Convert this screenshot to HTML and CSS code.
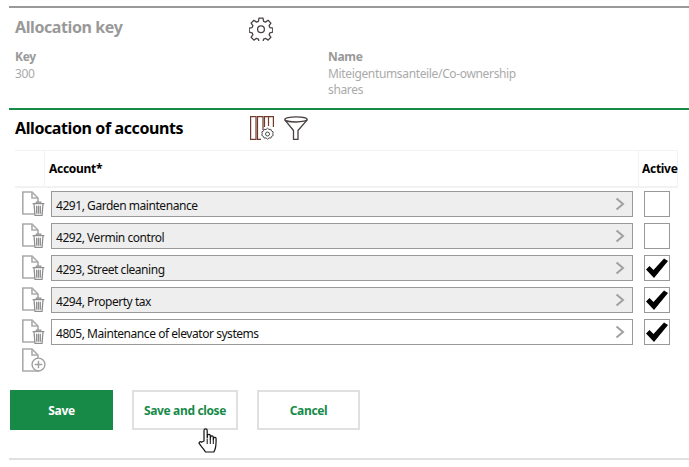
FILE: index.html
```html
<!DOCTYPE html>
<html lang="en">
<head>
<meta charset="utf-8">
<title>Allocation key</title>
<link rel="stylesheet" href="styles.css">
</head>
<body>
<svg class="defs" width="0" height="0" aria-hidden="true">
  <defs>
    <symbol id="gear" viewBox="0 0 24 24">
      <path fill="none" stroke="currentColor" stroke-width="1.3" stroke-linejoin="round" d="M10 1.200h4l.6 3.100 1.900.8 2.600-1.800 2.800 2.800-1.800 2.600.8 1.900 2.900.6v4l-2.900.6-.8 1.900 1.800 2.600-2.800 2.800-2.600-1.800-1.900.8-.6 2.900h-4l-.6-2.900-1.900-.8-2.600 1.800-2.800-2.800 1.800-2.600-.8-1.900-2.900-.6v-4l2.900-.6.8-1.900-1.800-2.600 2.800-2.800 2.600 1.800 1.900-.8z"/>
      <circle cx="12" cy="12.200" r="3.400" fill="none" stroke="currentColor" stroke-width="1.3"/>
    </symbol>
    <symbol id="doc" viewBox="0 0 20 24">
      <path fill="none" stroke="#aaa" stroke-width="1.600" d="M1.800 1h9.200l6 6v16h-15.200z"/>
      <path fill="none" stroke="#aaa" stroke-width="1.600" d="M11 1v6h6"/>
    </symbol>
    <symbol id="trash" viewBox="0 0 12 14">
      <path fill="#fff" stroke="#8f8f8f" stroke-width="1.200" d="M.5 2.500h11M4 2.500V1h4v1.500M1.800 2.500L2.700 13.500h6.600l.9-11z"/>
      <path stroke="#8f8f8f" stroke-width="1.200" d="M4.300 4.500v7.500M6 4.500v7.500M7.700 4.500v7.500"/>
    </symbol>
    <symbol id="chev" viewBox="0 0 10 14">
      <path d="M1.500 1.500L8 7l-6.500 5.500" fill="none" stroke="#a0a0a0" stroke-width="2"/>
    </symbol>
    <symbol id="tick" viewBox="0 0 22 20">
      <path d="M0 11.500L3.500 8l4 4L18 .5 22 3 8 20z" fill="#000"/>
    </symbol>
  </defs>
</svg>
<main class="page">
  <section class="key">
    <div class="head">
      <h2 class="title title-muted">Allocation key</h2>
      <svg class="gear-icon"><use href="#gear"/></svg>
    </div>
    <div class="fields">
      <div class="field field-key">
        <div class="label">Key</div>
        <div class="value">300</div>
      </div>
      <div class="field field-name">
        <div class="label">Name</div>
        <div class="value">Miteigentumsanteile/Co-ownership shares</div>
      </div>
    </div>
  </section>

  <section class="accounts">
    <div class="head head-accounts">
      <h2 class="title">Allocation of accounts</h2>
      <div class="tools">
        <svg class="tool-columns" viewBox="0 0 24 24">
          <g fill="none" stroke="#6e3a2c" stroke-width="1.200">
            <rect x=".6" y=".6" width="5.400" height="22.800"/>
            <path d="M13 14V.6H7.500v22.800H11"/>
            <path d="M14.500 11V.6H18.500V10M18.500.6h4.900V11"/>
          </g>
          <g fill="#fff" stroke="#4d4d4d" stroke-width="1">
            <path d="M17.500 12.200l1.500 1.300 1.900-.2.600 1.700 1.700.9-.4 1.800.4 1.800-1.700.9-.6 1.700-1.900-.2-1.500 1.300-1.500-1.300-1.900.2-.6-1.700-1.700-.9.400-1.800-.4-1.800 1.700-.9.6-1.700 1.900.2z"/>
            <circle cx="17.500" cy="18" r="2"/>
          </g>
        </svg>
        <svg class="tool-filter" viewBox="0 0 24 24">
          <g fill="none" stroke="#4a4040" stroke-width="1.300" stroke-linejoin="round">
            <ellipse cx="12" cy="3.400" rx="11.200" ry="2.600"/>
            <path d="M.8 3.800L9.500 14.500v9h4.500v-9L23.200 3.800"/>
          </g>
        </svg>
      </div>
    </div>

    <div class="grid-head">
      <div class="cell-icon"></div>
      <div class="cell-account">Account*</div>
      <div class="cell-active">Active</div>
    </div>

    <div class="rows">
      <div class="row">
        <div class="row-icon"><svg class="doc"><use href="#doc"/></svg><svg class="trash"><use href="#trash"/></svg></div>
        <div class="picker picker-off"><span>4291, Garden maintenance</span><svg class="chev"><use href="#chev"/></svg></div>
        <div class="check"></div>
      </div>
      <div class="row">
        <div class="row-icon"><svg class="doc"><use href="#doc"/></svg><svg class="trash"><use href="#trash"/></svg></div>
        <div class="picker picker-off"><span>4292, Vermin control</span><svg class="chev"><use href="#chev"/></svg></div>
        <div class="check"></div>
      </div>
      <div class="row">
        <div class="row-icon"><svg class="doc"><use href="#doc"/></svg><svg class="trash"><use href="#trash"/></svg></div>
        <div class="picker picker-off"><span>4293, Street cleaning</span><svg class="chev"><use href="#chev"/></svg></div>
        <div class="check"><svg class="tick"><use href="#tick"/></svg></div>
      </div>
      <div class="row">
        <div class="row-icon"><svg class="doc"><use href="#doc"/></svg><svg class="trash"><use href="#trash"/></svg></div>
        <div class="picker picker-off"><span>4294, Property tax</span><svg class="chev"><use href="#chev"/></svg></div>
        <div class="check"><svg class="tick"><use href="#tick"/></svg></div>
      </div>
      <div class="row">
        <div class="row-icon"><svg class="doc"><use href="#doc"/></svg><svg class="trash"><use href="#trash"/></svg></div>
        <div class="picker"><span>4805, Maintenance of elevator systems</span><svg class="chev"><use href="#chev"/></svg></div>
        <div class="check"><svg class="tick"><use href="#tick"/></svg></div>
      </div>
    </div>

    <div class="add-row">
      <svg class="doc"><use href="#doc"/></svg>
      <svg class="plus" viewBox="0 0 14 14"><circle cx="7" cy="7" r="6" fill="#fff" stroke="#a0a0a0" stroke-width="1.300"/><path d="M7 3.500v7M3.500 7h7" stroke="#a0a0a0" stroke-width="1.300"/></svg>
    </div>
  </section>

  <div class="actions">
    <button class="btn btn-primary" type="button">Save</button>
    <button class="btn btn-close" type="button">Save and close</button>
    <button class="btn btn-cancel" type="button">Cancel</button>
    <svg class="cursor" viewBox="0 0 20 26"><path d="M6 13V2.500a1.600 1.600 0 0 1 3.200 0V10l.3-2.400a1.400 1.400 0 0 1 2.800.2V11l.3-2.200a1.400 1.400 0 0 1 2.700.3V11.500l.3-1.400a1.300 1.300 0 0 1 2.500.4c0 4 0 7-.7 9.500-.4 1.600-1 3-1.500 4H7.500c-1-1.800-2.400-3.400-4-5.400L1.300 15.700c-.8-1.300.9-2.700 2.200-1.500z" fill="#fff" stroke="#111" stroke-width="1.200" stroke-linejoin="round"/><path d="M9.200 11v5M12.300 11v5M15.300 11.500v4.500" stroke="#111" stroke-width="1"/></svg>
  </div>
</main>
</body>
</html>
```

FILE: styles.css
```css
* { box-sizing: border-box; }
html, body { margin: 0; padding: 0; background: #fff; }
body {
  width: 689px;
  height: 467px;
  overflow: hidden;
  font-family: "Noto Sans", "Open Sans", "Liberation Sans", sans-serif;
  font-size: 12px;
}
.defs { position: absolute; }
.page { padding: 6px 0 0 9px; }

.key {
  border-top: 2px solid #999;
  border-bottom: 2px solid #178a48;
  height: 104px;
  padding: 9px 0 0 6px;
}
.head { display: flex; align-items: center; height: 24px; }
.title {
  margin: 0;
  width: 234px;
  font-size: 16px;
  font-weight: 700;
  line-height: 22px;
  color: #000;
  letter-spacing: -0.4px;
}
.title-muted { color: #999; margin-bottom: 4px; }
.gear-icon { width: 24px; height: 24px; color: #4a4343; }

.fields { display: flex; margin-top: 7px; }
.field-key { width: 313px; }
.field-name { width: 200px; }
.label { font-weight: 700; color: #999; line-height: 18px; letter-spacing: -0.3px; }
.value { color: #aaa; line-height: 16px; letter-spacing: -0.35px; }

.head-accounts { padding-left: 6px; height: 24px; margin-top: 6px; }
.tools { display: flex; align-items: center; gap: 10px; margin-left: 1px; }
.tool-columns { width: 24px; height: 24px; }
.tool-filter { width: 24px; height: 24px; }

.grid-head {
  display: flex;
  margin: 10px 11px 0 6px;
  height: 38px;
  border-top: 1px solid #f2f2f2;
  border-bottom: 2px solid #f2f2f2;
  font-weight: 700;
  color: #000;
  letter-spacing: -0.3px;
  align-items: stretch;
}
.cell-icon { width: 30px; border-right: 1px solid #f2f2f2; }
.cell-account { flex: 1; padding-left: 4px; line-height: 35px; }
.cell-active {
  width: 40px;
  border-left: 1px solid #f2f2f2;
  border-right: 1px solid #f2f2f2;
  line-height: 35px;
  padding-left: 3px;
  white-space: nowrap;
}

.rows { display: flex; flex-direction: column; gap: 4px; margin-top: 2px; }
.row { display: flex; align-items: center; height: 28px; padding-left: 12px; }
.row-icon { position: relative; width: 30px; height: 28px; flex: none; }
.doc { position: absolute; left: 0; top: 1px; width: 20px; height: 24px; }
.trash { position: absolute; left: 11px; top: 11px; width: 13px; height: 15px; }

.picker {
  width: 582px;
  height: 26px;
  flex: none;
  display: flex;
  align-items: center;
  justify-content: space-between;
  padding: 0 7px 0 4px;
  border: 1px solid #999;
  background: #fff;
  color: #111;
  letter-spacing: -0.45px;
}
.picker span { padding-top: 2px; }
.picker-off { background: #eee; }
.chev { width: 10px; height: 14px; }

.check {
  width: 26px;
  height: 26px;
  margin-left: 11px;
  flex: none;
  border: 1px solid #999;
  background: #fff;
  display: flex;
  align-items: center;
  justify-content: center;
}
.tick { width: 22px; height: 20px; }

.add-row { position: relative; height: 26px; margin: 1px 0 0 12px; }
.plus { position: absolute; left: 10px; top: 10px; width: 15px; height: 15px; }

.actions {
  position: relative;
  display: flex;
  gap: 19px;
  margin-top: 17px;
  height: 70px;
  padding-bottom: 28px;
  padding-left: 1px;
  border-bottom: 2px solid #e0e0e0;
}
.btn {
  height: 40px;
  padding: 0;
  font-family: inherit;
  font-size: 12px;
  font-weight: 700;
  letter-spacing: -0.35px;
  border: 2px solid #e0e0e0;
  background: #fff;
  color: #178a48;
}
.btn-primary { width: 103px; background: #178a48; border-color: #178a48; color: #fff; }
.btn-close { width: 106px; }
.btn-cancel { width: 103px; }
.cursor { position: absolute; left: 189px; top: 38px; width: 20px; height: 26px; }
```
